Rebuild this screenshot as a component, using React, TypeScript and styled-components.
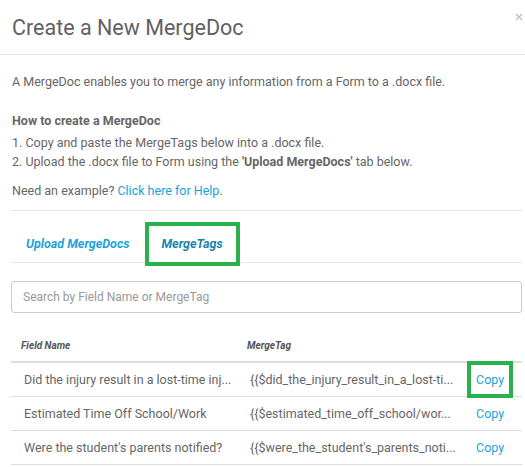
import styled, { createGlobalStyle } from 'styled-components';

const GlobalStyle = createGlobalStyle`
	body {
		margin: 0;
		background: #fff;
		font-family: Roboto, 'Liberation Sans', sans-serif;
		color: #666;
	}
`;

const rows = [
	{ name: 'Did the injury result in a lost-time inj...', tag: '{{$did_the_injury_result_in_a_lost-ti...', active: true },
	{ name: 'Estimated Time Off School/Work', tag: '{{$estimated_time_off_school/wor...', active: false },
	{ name: "Were the student's parents notified?", tag: "{{$were_the_student's_parents_noti...", active: false },
];

const CloseIcon = () => (
	<svg width="8" height="8" viewBox="0 0 8 8">
		<path d="M1 1 L7 7 M7 1 L1 7" stroke="#c4c4c4" strokeWidth="1.6" />
	</svg>
);

const App = () => {
	return (
		<>
			<GlobalStyle />
			<Modal>
				<Header>
					<Title>Create a New MergeDoc</Title>
					<CloseButton aria-label="close">
						<CloseIcon />
					</CloseButton>
				</Header>
				<Body>
					<Intro>A MergeDoc enables you to merge any information from a Form to a .docx file.</Intro>
					<HowTo>How to create a MergeDoc</HowTo>
					<Steps>
						<li>1. Copy and paste the MergeTags below into a .docx file.</li>
						<li>
							2. Upload the .docx file to Form using the <b>'Upload MergeDocs'</b> tab below.
						</li>
					</Steps>
					<Help>
						Need an example? <a href="#">Click here for Help</a>.
					</Help>
					<TabBar>
						<Tab>Upload MergeDocs</Tab>
						<Tab $active>MergeTags</Tab>
					</TabBar>
					<Search placeholder="Search by Field Name or MergeTag" />
					<Table>
						<colgroup>
							<col style={{ width: 226 }} />
							<col style={{ width: 228 }} />
							<col />
						</colgroup>
						<thead>
							<tr>
								<th>Field Name</th>
								<th>MergeTag</th>
								<th></th>
							</tr>
						</thead>
						<tbody>
							{rows.map((r) => (
								<tr key={r.tag}>
									<td>{r.name}</td>
									<td>{r.tag}</td>
									<td>
										<CopyLink $active={r.active}>Copy</CopyLink>
									</td>
								</tr>
							))}
						</tbody>
					</Table>
				</Body>
			</Modal>
		</>
	);
};

const Modal = styled.div`
	width: 525px;
	height: 467px;
	overflow: hidden;
	background: #fff;
`;

const Header = styled.div`
	position: relative;
	height: 54px;
	display: flex;
	align-items: center;
	padding: 0 12px;
	border-bottom: 1px solid #e5e5e5;
`;

const Title = styled.h4`
	margin: 0;
	font-size: 21.5px;
	font-weight: 400;
	color: #616161;
`;

const CloseButton = styled.button`
	position: absolute;
	top: 13px;
	right: 2px;
	padding: 0;
	border: 0;
	background: none;
	line-height: 0;
`;

const Body = styled.div`
	padding: 0 3px 0 11px;
	font-size: 12.5px;
	line-height: 19px;
`;

const Intro = styled.p`
	margin: 17px 0 0;
	padding-left: 1px;
`;

const HowTo = styled.p`
	margin: 20px 0 0;
	padding-left: 1px;
	font-weight: 700;
`;

const Steps = styled.ul`
	list-style: none;
	margin: 3px 0 0;
	padding: 0 0 0 1px;
	& b {
		font-weight: 700;
	}
`;

const Help = styled.p`
	margin: 10px 0 0;
	padding: 0 0 10px 1px;
	border-bottom: 1px solid #e5e5e5;
	& a {
		color: #1ba3d9;
		text-decoration: none;
	}
`;

const TabBar = styled.div`
	display: flex;
	gap: 6px;
	padding: 15px 0 0 2px;
	border-bottom: 1px solid #e5e5e5;
`;

const Tab = styled.a<{ $active?: boolean }>`
	padding: 10px 13px 11px;
	font-size: 12.5px;
	line-height: 15px;
	font-weight: 700;
	font-style: italic;
	color: ${(p) => (p.$active ? '#1a84aa' : '#1ba3d9')};
	outline: ${(p) => (p.$active ? '4px solid #28b14c' : 'none')};
	cursor: pointer;
`;

const Search = styled.input`
	display: block;
	box-sizing: border-box;
	width: 100%;
	height: 32px;
	margin-top: 18px;
	padding: 0 11px;
	border: 1px solid #ccc;
	border-radius: 3px;
	font-family: inherit;
	font-size: 12px;
	color: #555;
	&::placeholder {
		color: #999;
	}
`;

const Table = styled.table`
	width: 100%;
	margin-top: 18px;
	border-collapse: collapse;
	table-layout: fixed;
	& th {
		padding: 8px 10px;
		font-size: 10px;
		line-height: 14px;
		font-weight: 700;
		font-style: italic;
		text-align: left;
		color: #555;
		border-bottom: 2px solid #ddd;
	}
	& td {
		padding: 8px 13px;
		line-height: 17px;
		white-space: nowrap;
		overflow: hidden;
		border-bottom: 1px solid #ddd;
	}
	& td:last-child {
		padding: 8px 0 8px 11px;
		overflow: visible;
	}
`;

const CopyLink = styled.a<{ $active?: boolean }>`
	display: inline-block;
	color: #1ba3d9;
	cursor: pointer;
	${(p) =>
		p.$active
			? 'padding: 6px 5px; margin: -6px -5px; outline: 4px solid #28b14c;'
			: ''}
`;

export default App;
